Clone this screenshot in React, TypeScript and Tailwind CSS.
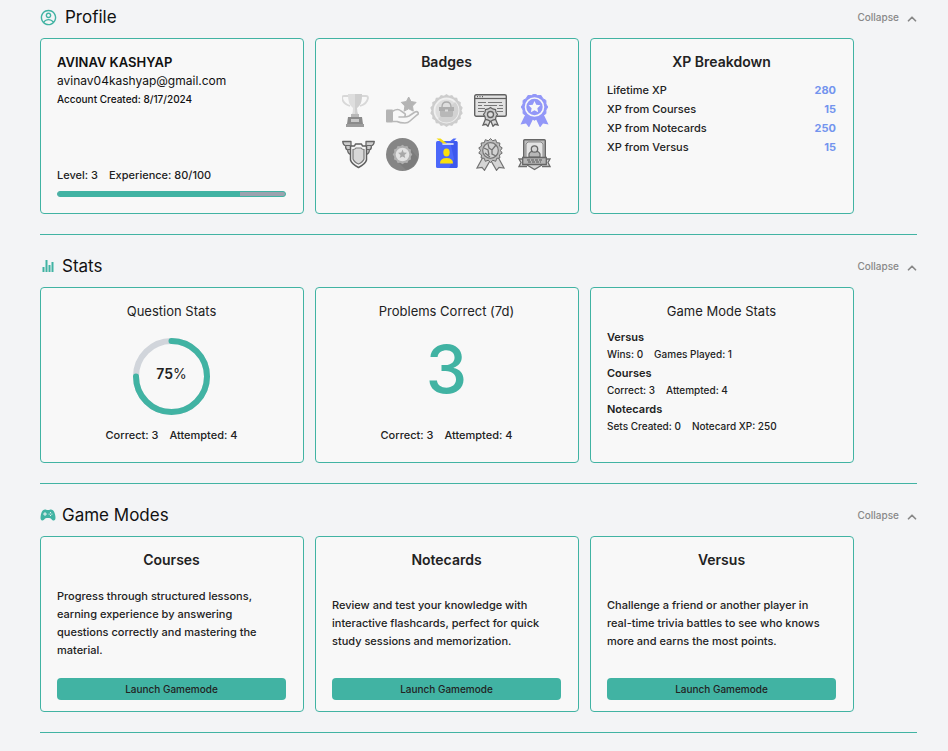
import type { ReactNode } from "react";
import { CgProfile } from "react-icons/cg";
import { IoGameController } from "react-icons/io5";
import { IoIosStats } from "react-icons/io";
import { ChevronUp } from "lucide-react";

function Section({ icon, title, children }: { icon: ReactNode; title: string; children: ReactNode }) {
  return (
    <section className="border-b border-[#41b3a3] pb-5">
      <header className="mb-[7px] flex h-7 items-center justify-between">
        <h2 className="flex items-center text-[17px] leading-7">
          {icon}
          {title}
        </h2>
        <button type="button" className="flex items-center gap-1.5 text-[10px] leading-4 font-medium text-[#888888]">
          Collapse
          <ChevronUp className="mt-1 -mr-0.5 size-3.5" strokeWidth={3} />
        </button>
      </header>
      <div className="mr-[63px] grid grid-cols-3 gap-[11px]">{children}</div>
    </section>
  );
}

function Card({ children }: { children: ReactNode }) {
  return (
    <article className="flex min-h-44 flex-col rounded border border-[#41b3a3] bg-[#f8f8f8] pt-[13px] pr-[17px] pb-[11px] pl-4 text-[#222222]">
      {children}
    </article>
  );
}

function CardTitle({ children, light = false }: { children: ReactNode; light?: boolean }) {
  return (
    <h3 className={light ? "text-center text-[13px] leading-5" : "text-center text-[14px] leading-5 font-semibold"}>
      {children}
    </h3>
  );
}

function Badge({ label, children }: { label: string; children: ReactNode }) {
  return (
    <svg viewBox="0 0 33 33" className="size-[33px]" role="img" aria-label={label}>
      {children}
    </svg>
  );
}

function scallop(cx: number, cy: number, outer: number, inner: number, count: number) {
  const points: string[] = [];
  for (let i = 0; i < count * 2; i++) {
    const r = i % 2 === 0 ? outer : inner;
    const a = (Math.PI * i) / count - Math.PI / 2;
    points.push(`${(cx + r * Math.cos(a)).toFixed(2)},${(cy + r * Math.sin(a)).toFixed(2)}`);
  }
  return points.join(" ");
}

function Badges() {
  return (
    <div className="mx-auto mt-[22px] grid grid-cols-5 gap-[11px]">
      <Badge label="Trophy">
        <path d="M7 2H2Q0 2 0 4Q1 10 8 12M19 2h5q2 0 2 2q-1 6-8 8" fill="none" stroke="#d8d8d8" strokeWidth="1.8" />
        <path d="M6 0h14q0 9-3 12l-2 2q0 4 1 6h-6q1-2 1-6l-2-2Q6 9 6 0z" fill="#dedede" />
        <path d="M13 0h7q0 9-3 12l-2 2q0 4 1 6h-3z" fill="#cfcfcf" />
        <path d="M9 20h8v3H9z" fill="#b8b8b8" />
        <path d="M6 23h14l1 7H5z" fill="#8b8b8b" />
        <path d="M9 25h8v3H9z" fill="#c9c9c9" />
        <path d="M4 30h18v3H4z" fill="#9c9c9c" />
      </Badge>
      <Badge label="Star in hand">
        <polygon points={scallop(22.7, 10.8, 7.8, 4, 5)} fill="#b4b4b4" stroke="#b4b4b4" strokeLinejoin="round" />
        <rect x="0" y="15.5" width="7" height="13" rx="1" fill="#b4b4b4" />
        <path d="M7 17q5-3 8 0l3 2q2 1 1 3l-1 1h-5M18 23q3 0 5-1l6-4q2-1 3 .5t-1 2.5l-7 6q-2 2-5 2-5 0-8-1.5H7" fill="none" stroke="#b9b9b9" strokeWidth="1.6" strokeLinecap="round" />
      </Badge>
      <Badge label="Medal with chest">
        <polygon points={scallop(16.5, 16.5, 16.5, 15, 18)} fill="#cdcdcd" />
        <circle cx="16.5" cy="16.5" r="12" fill="#dedede" stroke="#f0f0f0" strokeWidth="1.8" />
        <path d="M25 8a12 12 0 0 1-17 17z" fill="#d2d2d2" />
        <path d="M12 13q0-5 4.500-5t4.500 5" fill="none" stroke="#aaaaaa" strokeWidth="1.300" />
        <path d="M9 13h15v4H9z" fill="#adadad" />
        <path d="M10 17h13v4q0 2-2 2h-9q-2 0-2-2z" fill="#b8b8b8" />
        <path d="M15 15.500h3v2h-3z" fill="#dddddd" />
      </Badge>
      <Badge label="Certificate">
        <rect x=".7" y=".7" width="31.6" height="21.6" rx="1.5" fill="#e2e2e2" stroke="#626262" strokeWidth="1.4" />
        <path d="M1 4.500h31" stroke="#626262" strokeWidth="1.2" />
        <path d="M3 2.600h1M5.500 2.600h1M8 2.600h1" stroke="#626262" strokeWidth="1.2" />
        <path d="M4 8.500h8M14 8.500h14M4 11.500h4M10 11.500h13M25 11.500h4M4 14.500h7M23 14.500h6M4 17.500h6M23 17.500h6" stroke="#777777" strokeWidth="1.2" />
        <path d="M12 24l-3 7 3-.7 2 2 2.500-6 2.500 6 2-2 3 .7-3-7z" fill="#dadada" stroke="#626262" strokeWidth="1.3" />
        <polygon points={scallop(16.5, 20.5, 7, 6, 8)} fill="#c9c9c9" stroke="#626262" strokeWidth="1.2" />
        <circle cx="16.5" cy="20.5" r="3" fill="#dddddd" stroke="#626262" strokeWidth="1.3" />
      </Badge>
      <Badge label="Star rosette">
        <path d="M8 19L2.500 30.500l5.500-1 3 4 5.500-11.500 5.500 11.500 3-4 5.500 1L25 19z" fill="#9297f8" />
        <polygon points={scallop(16.5, 13, 13.2, 11.8, 12)} fill="#9297f8" stroke="#9297f8" strokeLinejoin="round" />
        <circle cx="16.5" cy="13" r="9" fill="none" stroke="#f8f8f8" strokeWidth="1.6" />
        <polygon points={scallop(16.5, 13.2, 6.2, 3, 5)} fill="#f8f8f8" />
      </Badge>
      <Badge label="Winged shield">
        <path d="M9 3.500H.7q.3 3.500 3 4.500-.5 3 2 4-.2 3.500 3.300 4.500zM24 3.500h8.300q-.3 3.500-3 4.500.5 3-2 4 .2 3.500-3.300 4.500z" fill="#cccccc" stroke="#666666" strokeWidth="1.300" strokeLinejoin="round" />
        <path d="M3.500 7.500H8M5.500 11.500H8M29.500 7.500H25M27.500 11.500H25" stroke="#666666" />
        <path d="M8.500 8h4l1-2h6l1 2h4v14q-1 4-8 7.500Q9.500 26 8.500 22z" fill="#f4f4f4" stroke="#5f5f5f" strokeWidth="1.500" strokeLinejoin="round" />
        <path d="M11 11.500q2 0 3-1.500h5q1 1.500 3 1.500V21q-1 3-5.500 5Q12 24 11 21z" fill="#d8d8d8" stroke="#7a7a7a" strokeWidth="1.200" />
      </Badge>
      <Badge label="Star coin">
        <circle cx="16.5" cy="16.5" r="16.5" fill="#858585" />
        <path d="M23 9l9 11q-3 10-12 12l-9-9z" fill="#7c7c7c" />
        <polygon points={scallop(16.5, 16.5, 9.8, 8.5, 12)} fill="#b0b0b0" />
        <circle cx="16.5" cy="16.5" r="6.8" fill="#e2e2e2" />
        <polygon points={scallop(16.5, 16.3, 4.7, 2.1, 5)} fill="#a8a8a8" />
      </Badge>
      <Badge label="Identity card">
        <rect x="6" y="3" width="21.5" height="27" rx="1.5" fill="#4c68fa" />
        <path d="M20 3h6q1.500 0 1.500 1.500v24q0 1.500-1.500 1.500h-7l5-9z" fill="#3c58ee" />
        <path d="M13 6h10" stroke="#f8f8f8" strokeWidth="1.600" strokeLinecap="round" />
        <path d="M6.500.5h4l6.500 5h-4z" fill="#f5dc12" />
        <path d="M26.500.5h-3l-4 3h4z" fill="#4c68fa" />
        <ellipse cx="16.5" cy="14.5" rx="3.2" ry="4" fill="#fbe00c" />
        <path d="M10 25.500q0-5.500 6.500-5.500t6.500 5.500z" fill="#fbe00c" />
      </Badge>
      <Badge label="Laurel rosette">
        <path d="M9 19L3 30l5-.7 2.500 3L16.500 22l6 10.300 2.500-3 5 .7-6-11z" fill="#d5d5d5" stroke="#737373" strokeWidth="1.200" />
        <polygon points={scallop(16.5, 12.5, 12, 10, 14)} fill="#bcbcbc" stroke="#6b6b6b" strokeWidth="1" />
        <circle cx="16.5" cy="12.5" r="7.8" fill="#d2d2d2" stroke="#777777" strokeWidth="1.2" />
        <path d="M10 10l4 2 1 5M14 6l1 4 3 2 4-5M18 12l0 4 4 2M11 15l5 4" fill="none" stroke="#747474" strokeWidth="1.300" />
      </Badge>
      <Badge label="Portrait plaque">
        <path d="M6 21H1l2 3.500-2 4h8M27 21h5l-2 3.500 2 4h-8M9 27l7.500 4.500L24 27" fill="#d5d5d5" stroke="#6b6b6b" strokeWidth="1.300" />
        <rect x="5.7" y="1.7" width="21.6" height="20" rx="1" fill="#bbbbbb" stroke="#666666" strokeWidth="1.4" />
        <path d="M10 4h13l2 2v14H8V6z" fill="#e3e3e3" stroke="#8b8b8b" />
        <path d="M11 19v-3q1-3 5.500-3t5.500 3v3z" fill="#b8b8b8" stroke="#666666" strokeWidth="1.200" />
        <circle cx="16.5" cy="11" r="3.2" fill="#d5d5d5" stroke="#666666" strokeWidth="1.3" />
        <path d="M4.700 19.500h23.600v7H4.700z" fill="#b5b5b5" stroke="#666666" strokeWidth="1.300" />
        <path d="M9 22h15M10 24h13" stroke="#777777" strokeWidth="1.300" strokeDasharray="3 1" />
      </Badge>
    </div>
  );
}

const xp = [
  ["Lifetime XP", 280],
  ["XP from Courses", 15],
  ["XP from Notecards", 250],
  ["XP from Versus", 15],
];

const modeStats = [
  ["Versus", "Wins: 0", "Games Played: 1"],
  ["Courses", "Correct: 3", "Attempted: 4"],
  ["Notecards", "Sets Created: 0", "Notecard XP: 250"],
];

const modes = [
  ["Courses", "Progress through structured lessons, earning experience by answering questions correctly and mastering the material."],
  ["Notecards", "Review and test your knowledge with interactive flashcards, perfect for quick study sessions and memorization."],
  ["Versus", "Challenge a friend or another player in real-time trivia battles to see who knows more and earns the most points."],
];

function Totals() {
  return (
    <p className="mt-auto mb-1.5 flex justify-center gap-[11px] text-[11px] leading-5 font-medium">
      <span>Correct: 3</span>
      <span>Attempted: 4</span>
    </p>
  );
}

export default function App() {
  return (
    <main className="flex min-h-screen flex-col gap-[17px] bg-[#f3f4f6] pt-[3px] pr-[31px] pl-10 font-['Inter','Liberation_Sans',sans-serif] text-[#111111]">
      <Section title="Profile" icon={<CgProfile className="mr-2 size-[17px] text-[#41b3a3]" />}>
        <Card>
          <h3 className="text-[13px] leading-5 font-semibold text-[#111111]">AVINAV KASHYAP</h3>
          <p className="text-[12px] leading-[18px] text-[#111111]">avinav04kashyap@gmail.com</p>
          <p className="text-[10px] leading-[18px] font-medium text-[#111111]">Account Created: 8/17/2024</p>
          <p className="mt-auto mb-[7px] flex gap-[11px] text-[11px] leading-[18px] font-medium">
            <span>Level: 3</span>
            <span>Experience: 80/100</span>
          </p>
          <div className="mb-[5px] h-1.5 overflow-hidden rounded-full border border-[#41b3a3] bg-[#9ca3af]">
            <div className="h-full w-4/5 bg-[#41b3a3]" />
          </div>
        </Card>
        <Card>
          <CardTitle>Badges</CardTitle>
          <Badges />
        </Card>
        <Card>
          <CardTitle>XP Breakdown</CardTitle>
          <dl className="mt-[9px]">
            {xp.map(([label, value]) => (
              <div key={label} className="flex justify-between text-[11px] leading-[19px] font-medium">
                <dt>{label}</dt>
                <dd className="font-bold text-[#7394ee]">{value}</dd>
              </div>
            ))}
          </dl>
        </Card>
      </Section>

      <Section title="Stats" icon={<IoIosStats className="mr-1.5 size-4 text-[#41b3a3]" />}>
        <Card>
          <CardTitle light>Question Stats</CardTitle>
          <div className="mx-auto mt-[17px] grid size-[77px] place-items-center">
            <svg viewBox="0 0 77 77" className="col-start-1 row-start-1 size-full -rotate-90" fill="none" strokeWidth="6">
              <circle cx="38.5" cy="38.5" r="35.5" stroke="#d1d5db" />
              <circle cx="38.5" cy="38.5" r="35.5" stroke="#41b3a3" strokeLinecap="round" pathLength="100" strokeDasharray="75 100" />
            </svg>
            <p className="col-start-1 row-start-1 pb-1.5 text-[14px] leading-5">
              <span className="font-semibold">75</span>%
            </p>
          </div>
          <Totals />
        </Card>
        <Card>
          <CardTitle light>Problems Correct (7d)</CardTitle>
          <p className="mt-[15px] text-center text-[66px] leading-[66px] font-medium text-[#41b3a3]">3</p>
          <Totals />
        </Card>
        <Card>
          <CardTitle light>Game Mode Stats</CardTitle>
          <div className="mt-[7px] flex flex-col gap-0.5">
            {modeStats.map(([name, first, second]) => (
              <div key={name}>
                <h4 className="text-[11px] leading-[18px] font-semibold">{name}</h4>
                <p className="flex gap-[11px] text-[10px] leading-4 font-medium">
                  <span>{first}</span>
                  <span>{second}</span>
                </p>
              </div>
            ))}
          </div>
        </Card>
      </Section>

      <Section title="Game Modes" icon={<IoGameController className="mr-1.5 size-4 text-[#41b3a3]" />}>
        {modes.map(([name, text]) => (
          <Card key={name}>
            <CardTitle>{name}</CardTitle>
            <div className="flex flex-1 items-center pr-1 pb-0.5">
              <p className="text-[11px] leading-[18px] font-medium">{text}</p>
            </div>
            <button type="button" className="h-[22px] rounded bg-[#41b3a3] text-[10px] leading-4 font-medium">
              Launch Gamemode
            </button>
          </Card>
        ))}
      </Section>
    </main>
  );
}
